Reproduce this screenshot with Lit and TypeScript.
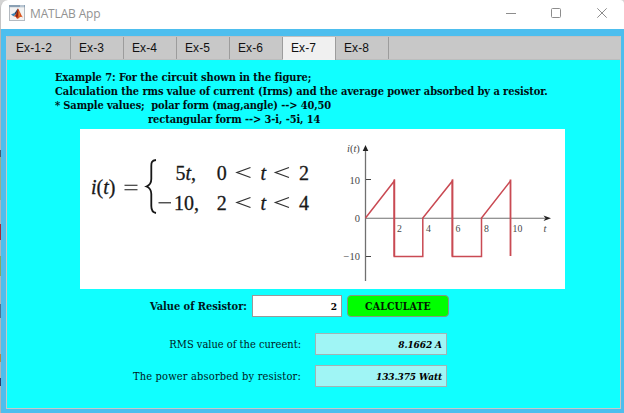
import { LitElement, html, css, svg } from "lit";
import { customElement, property, state } from "lit/decorators.js";
import { classMap } from "lit/directives/class-map.js";

@customElement("title-bar")
class TitleBar extends LitElement {
  static styles = css`
    :host { display: flex; height: 29px; background: #fff; border-left: 1px solid #c4c4c4; border-radius: 8px 4px 0 0; box-sizing: border-box; align-items: flex-start; }
    .logo { width: 16px; height: 16px; margin: 5px 0 0 8px; }
    .name { flex: 1; font: 12px/16px "Open Sans", sans-serif; letter-spacing: -0.15px; color: #929292; margin: 6px 0 0 5px; }
    .controls { width: 129px; height: 29px; }
  `;
  render() {
    return html`
      <svg class="logo" viewBox="0 0 16 16">
        <rect x=".5" y=".5" width="15" height="15" fill="#f3f3f3" stroke="#b4bac0" />
        <path d="M0 0H16V2.2H0Z" fill="#8aa0b4" />
        <path d="M11 1H15" stroke="#e4e9ee" />
        <path d="M2 9.6L5.4 8L7 9.8L4.5 11.3Z" fill="#3b86b8" />
        <path d="M5.4 8C7 7 7.5 4.6 9 3.6L8.4 8L7 9.8Z" fill="#26476b" />
        <path d="M9 3.6C10.3 5 11.6 9.5 14 12.4C12.4 11.2 11.4 11.6 10.4 12.4C9.4 13.4 8.8 13.8 7.9 13.8C7.2 12 6.4 11.3 4.5 11.3C7.5 10.6 7.8 6 9 3.6Z" fill="#d9541e" />
        <path d="M9 3.6C9.7 6 9.8 9 8.1 13.5C7.7 12 7.1 11.6 6.5 11C8.2 9.2 8.1 5.7 9 3.6Z" fill="#8b2315" />
        <path d="M9.5 5.5C10.8 8 11 10 10 12Z" fill="#f2a23a" />
      </svg>
      <span class="name">MATLAB App</span>
      <svg class="controls" viewBox="495 0 129 29" fill="none" stroke="#8d8d8d">
        <path d="M506 13.5H516" />
        <rect x="551.5" y="8.5" width="9" height="9" rx="1" />
        <path d="M597.3 8.3L606.7 17.7M606.7 8.3L597.3 17.7" />
      </svg>
    `;
  }
}

@customElement("current-figure")
class CurrentFigure extends LitElement {
  static styles = css`
    :host { display: block; width: 485px; height: 160px; background: #fff; }
    svg { display: block; font-family: "Liberation Serif", serif; }
    .formula { font-size: 20px; fill: #181818; stroke: #181818; stroke-width: 0.3; }
    .it { font-style: italic; }
    .label { font-size: 10.5px; fill: #484848; }
    .small { font-size: 9.8px; }
    .end { text-anchor: end; }
  `;
  render() {
    const ticks: [number, string][] = [[397, "2"], [426, "4"], [455.5, "6"], [484, "8"], [512.5, "10"]];
    const less = (x: number, y: number) => svg`<path d="M${x + 13.5} ${y - 11}L${x} ${y - 6}L${x + 13.5} ${y - 1}" fill="none" stroke="#303030" stroke-width="1.25"/>`;
    return html`
      <svg width="485" height="160" viewBox="80 129 485 160">
        <g class="formula">
          <text x="91" y="194"><tspan class="it">i</tspan>(<tspan class="it">t</tspan>)</text>
          <path d="M124.5 185.3H137.5M124.5 189.7H137.5" stroke-width="1.1" />
          <path d="M156 160C151.5 160.5 151.3 163 151.3 166V179C151.3 183 150.2 185 146.5 186.5C150.2 188 151.3 190 151.3 194V206C151.3 210 152.5 212.5 156 213" fill="none" stroke-width="1.8" />
          <text x="175.5" y="179.5">5<tspan class="it">t</tspan>,</text>
          <path d="M158.5 202.8H171" stroke-width="1.1" />
          <text x="174" y="209.5">10,</text>
          <text x="216.8" y="179.5">0</text>
          <text class="it" x="260.5" y="179.5">t</text>
          <text x="299" y="179.5">2</text>
          <text x="216.8" y="209.5">2</text>
          <text class="it" x="260.5" y="209.5">t</text>
          <text x="299" y="209.5">4</text>
        </g>
        ${less(237, 178.5)}${less(275.5, 178.5)}${less(237, 208.5)}${less(275.5, 208.5)}
        <g fill="none" stroke="#707070">
          <path d="M365.5 150V281" stroke-width="1.3" />
          <path d="M365 218.2H545" stroke-width="1.1" />
          <path d="M366 179.5H371M366 256.5H371" stroke="#444" />
        </g>
        <path d="M365.5 145L368.3 151H362.7ZM551 218.3L543.5 215.4L545.5 218.3L543.5 221Z" fill="#222" />
        <g fill="none" stroke="#c94a53" stroke-width="1.5">
          <path d="M365.5 218L394.3 181V256.5H422.8V218L452.4 181V256.5H481.5V218L510.5 181" />
          <path d="M394.3 179.5V256.5M452.4 179.5V256.5M510.5 179.5V256" stroke-width="1.8" />
        </g>
        <g class="label">
          <text x="347" y="151.5"><tspan class="it">i</tspan>(<tspan class="it">t</tspan>)</text>
          <text class="end" x="360" y="183.5">10</text>
          <text class="end" x="360" y="222">0</text>
          <text class="end" x="360" y="260.3">−10</text>
          ${ticks.map(([x, t]) => svg`<text class="small" x=${x} y="231.5">${t}</text>`)}
          <text class="it" x="543.5" y="231.5">t</text>
        </g>
      </svg>
    `;
  }
}

@customElement("value-field")
class ValueField extends LitElement {
  @property() value = "";
  static styles = css`
    :host { display: block; box-sizing: border-box; height: 22px; border: 1px solid #999; background: #fff; padding-right: 4px; text-align: right; font: bold 10px/21px "DejaVu Serif Condensed", "DejaVu Serif", serif; color: #000; white-space: nowrap; }
    :host(.result) { background: #a0f5f5; border-color: #a0b4b4; font-style: italic; letter-spacing: -0.1px; }
  `;
  render() {
    return html`${this.value}`;
  }
}

@customElement("app-root")
class AppRoot extends LitElement {
  @state() private active = "Ex-7";
  private tabs = ["Ex-1-2", "Ex-3", "Ex-4", "Ex-5", "Ex-6", "Ex-7", "Ex-8"];

  static styles = css`
    :host { display: flex; flex-direction: column; width: 624px; height: 413px; background: #d4d4d4; overflow: hidden; }
    .window { flex: 1; display: flex; }
    /* Sliver of the desktop visible beside the window */
    .desktop { width: 1px; background: linear-gradient(#b4b4b4 0 121px, #4d5868 121px 128px, #a0aa82 128px 171px, #b4b4b4 171px 195px, #a52a35 195px 211px, #b4b4b4 211px 227px, #8fa35c 227px 247px, #b4b4b4 247px 275px, #52708c 275px 289px, #b4b4b4 289px 325px, #b98540 325px 333px, #b4b4b4 333px 349px, #333a66 349px 357px, #b4b4b4 357px); }
    .frame { flex: 1; display: flex; box-sizing: border-box; background: #4dbeee; padding: 7px 3px 4px 5px; }
    .group { flex: 1; display: flex; flex-direction: column; box-sizing: border-box; border: 1px solid #c8c8c8; border-top: 0; background: #0ff; }
    .tabs { display: flex; box-sizing: border-box; height: 24px; background: #c8c8c8; border-top: 1px solid #c1c1c1; border-bottom: 1px solid #bdbdbd; }
    .tab { box-sizing: border-box; width: 53px; border-right: 1px solid #9c9c9c; padding-left: 8px; font: 12px/22px "Liberation Sans", Arial, sans-serif; letter-spacing: 0.1px; color: #111; }
    .tab.first { width: 64px; padding-left: 9px; }
    .tab.active { background: #f0f0f0; height: 23px; }
    .panel { flex: 1; background: #10ffff; display: flex; flex-direction: column; font: 11px/14px "DejaVu Serif Condensed", "DejaVu Serif", serif; color: #00191c; }
    .intro { margin: 11px 0 0 48px; height: 56px; font-weight: bold; font-size: 11px; white-space: pre; }
    .line { height: 14px; color: #000f12; }
    .l1, .l2 { letter-spacing: -0.07px; }
    .l3 { letter-spacing: -0.13px; }
    .l4 { letter-spacing: -0.1px; padding-left: 93px; }
    .figure { margin: 2px 0 0 73px; }
    .row { display: grid; align-items: center; height: 22px; white-space: nowrap; }
    .input { grid-template-columns: 240px 90px 102px; column-gap: 5px; margin-top: 6px; }
    .output { grid-template-columns: 294px 132px; column-gap: 14px; }
    .first-output { margin-top: 16px; }
    .second-output { margin-top: 10px; }
    .label { text-align: right; padding-top: 2px; }
    .second-output .label { letter-spacing: 0.16px; }
    .bold { font-weight: bold; font-size: 11px; letter-spacing: -0.03px; }
    .button { box-sizing: border-box; height: 22px; padding: 0; border: 1px solid #849884; border-radius: 4px; background: #0f0; color: #001900; font: bold 10.5px/20px "DejaVu Serif Condensed", "DejaVu Serif", serif; letter-spacing: 0.1px; }
  `;

  render() {
    return html`
      <title-bar></title-bar>
      <div class="window">
        <div class="desktop"></div>
        <div class="frame">
          <div class="group">
            <div class="tabs">
              ${this.tabs.map((t, i) => html`<div class=${classMap({ tab: true, first: i === 0, active: t === this.active })} @click=${() => (this.active = t)}>${t}</div>`)}
            </div>
            <div class="panel">
              <div class="intro"><div class="line l1">Example 7: For the circuit shown in the figure;</div><div class="line l2">Calculation the rms value of current (Irms) and the average power absorbed by a resistor.</div><div class="line l3">* Sample values;  polar form (mag,angle) --&gt; 40,50</div><div class="line l4">rectangular form --&gt; 3-i, -5i, 14</div></div>
              <current-figure class="figure"></current-figure>
              <div class="row input">
                <span class="label bold">Value of Resistor:</span>
                <value-field value="2"></value-field>
                <button class="button">CALCULATE</button>
              </div>
              <div class="row output first-output">
                <span class="label">RMS value of the cureent:</span>
                <value-field class="result" value="8.1662 A"></value-field>
              </div>
              <div class="row output second-output">
                <span class="label">The power absorbed by resistor:</span>
                <value-field class="result" value="133.375 Watt"></value-field>
              </div>
            </div>
          </div>
        </div>
      </div>
    `;
  }
}
